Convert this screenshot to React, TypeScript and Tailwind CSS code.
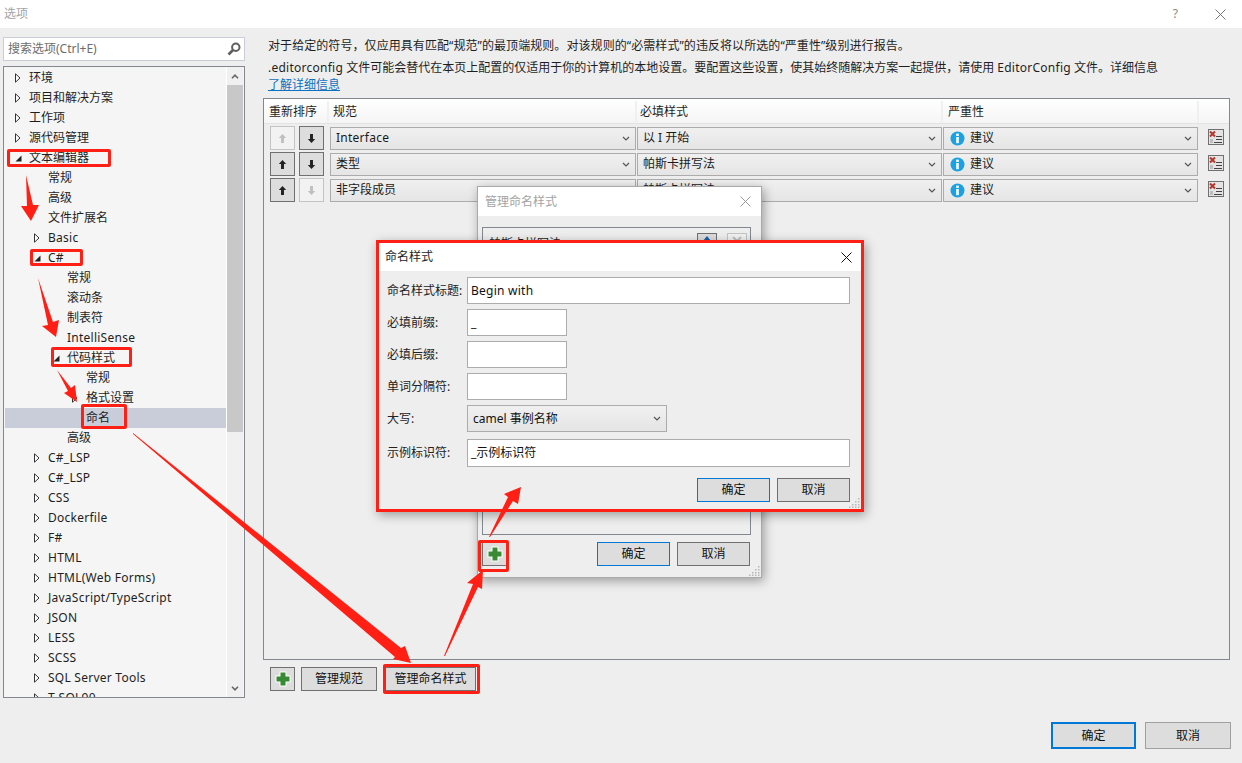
import React from "react";

const FONT = { fontFamily: '"Noto Sans", "Noto Sans CJK SC", sans-serif' };

type TreeRow = { label: string; level: number; arrow?: "open" | "closed"; selected?: boolean };

const TREE: TreeRow[] = [
  { label: "环境", level: 0, arrow: "closed" },
  { label: "项目和解决方案", level: 0, arrow: "closed" },
  { label: "工作项", level: 0, arrow: "closed" },
  { label: "源代码管理", level: 0, arrow: "closed" },
  { label: "文本编辑器", level: 0, arrow: "open" },
  { label: "常规", level: 1 },
  { label: "高级", level: 1 },
  { label: "文件扩展名", level: 1 },
  { label: "Basic", level: 1, arrow: "closed" },
  { label: "C#", level: 1, arrow: "open" },
  { label: "常规", level: 2 },
  { label: "滚动条", level: 2 },
  { label: "制表符", level: 2 },
  { label: "IntelliSense", level: 2 },
  { label: "代码样式", level: 2, arrow: "open" },
  { label: "常规", level: 3 },
  { label: "格式设置", level: 3, arrow: "closed" },
  { label: "命名", level: 3, selected: true },
  { label: "高级", level: 2 },
  { label: "C#_LSP", level: 1, arrow: "closed" },
  { label: "C#_LSP", level: 1, arrow: "closed" },
  { label: "CSS", level: 1, arrow: "closed" },
  { label: "Dockerfile", level: 1, arrow: "closed" },
  { label: "F#", level: 1, arrow: "closed" },
  { label: "HTML", level: 1, arrow: "closed" },
  { label: "HTML(Web Forms)", level: 1, arrow: "closed" },
  { label: "JavaScript/TypeScript", level: 1, arrow: "closed" },
  { label: "JSON", level: 1, arrow: "closed" },
  { label: "LESS", level: 1, arrow: "closed" },
  { label: "SCSS", level: 1, arrow: "closed" },
  { label: "SQL Server Tools", level: 1, arrow: "closed" },
  { label: "T-SQL90", level: 1, arrow: "closed" },
];

const RULES = [
  { spec: "Interface", style: "以 I 开始", up: false, down: true },
  { spec: "类型", style: "帕斯卡拼写法", up: true, down: true },
  { spec: "非字段成员", style: "帕斯卡拼写法", up: true, down: false },
];

function TreeArrow({ kind }: { kind: "open" | "closed" }) {
  if (kind === "open") {
    return (
      <svg width="7" height="7" viewBox="0 0 7 7">
        <path d="M6.5 0.5V6.5H0.5Z" fill="#222" />
      </svg>
    );
  }
  return (
    <svg width="6" height="10" viewBox="0 0 6 10">
      <path d="M0.5 0.8L5 5L0.5 9.2Z" fill="#fff" stroke="#333" strokeWidth="1" />
    </svg>
  );
}

function Chevron({ size = 8, color = "#555" }: { size?: number; color?: string }) {
  return (
    <svg width={size} height={size - 3} viewBox="0 0 8 5">
      <path d="M1 1L4 4L7 1" fill="none" stroke={color} strokeWidth="1.2" />
    </svg>
  );
}

function MoveButton({ dir, enabled }: { dir: "up" | "down"; enabled: boolean }) {
  const d =
    dir === "up" ? "M5.5 1L10 6H7.3V12H3.7V6H1Z" : "M5.5 12L10 7H7.3V1H3.7V7H1Z";
  return (
    <div
      className={
        enabled
          ? "flex h-6 w-[25px] items-center justify-center border border-[#707070] bg-[#dddddd]"
          : "flex h-6 w-[25px] items-center justify-center border border-[#c4c4c4] bg-[#f2f2f2]"
      }
    >
      <svg width="9" height="11" viewBox="0 0 11 13">
        <path d={d} fill={enabled ? "#222" : "#c0c0c0"} />
      </svg>
    </div>
  );
}

function Combo({ w, children }: { w: string; children: React.ReactNode }) {
  return (
    <div
      className={`flex h-[23px] items-center justify-between border border-[#acacac] bg-linear-to-b from-[#f0f0f0] to-[#e5e5e5] pl-[5px] pr-[5px] text-[12px] text-[#1a1a1a] ${w}`}
    >
      <div className="flex items-center">{children}</div>
      <Chevron />
    </div>
  );
}

function InfoIcon() {
  return (
    <svg width="15" height="15" viewBox="0 0 15 15" className="ml-px mr-[5px]">
      <circle cx="7.5" cy="7.5" r="7" fill="#1ba1e2" />
      <rect x="6.2" y="2.6" width="2.6" height="2.4" fill="#fff" />
      <rect x="6.2" y="6" width="2.6" height="6.2" fill="#fff" />
    </svg>
  );
}

function DeleteIcon() {
  return (
    <div className="mb-[2px] flex h-[16px] w-[16px] items-center justify-center border border-[#707070] bg-[#e4e4e4]">
      <svg width="14" height="14" viewBox="0 0 14 14">
        <path d="M1 1.5L6 6.5M6 1.5L1 6.5" stroke="#b5372a" strokeWidth="2" />
        <rect x="1" y="9" width="3" height="4" fill="#bdbdbd" />
        <path d="M7 6.5H13M7 9.5H13M5 12.5H13" stroke="#444" strokeWidth="1" />
      </svg>
    </div>
  );
}

function PlusIcon() {
  return (
    <svg width="16" height="16" viewBox="0 0 16 16">
      <path d="M4.5 0.5H11.5V4.5H15.5V11.5H11.5V15.5H4.5V11.5H0.5V4.5H4.5Z" fill="#fff" />
      <path d="M5.5 1.5H10.5V5.5H14.5V10.5H10.5V14.5H5.5V10.5H1.5V5.5H5.5Z" fill="#388a34" />
    </svg>
  );
}

function Grip() {
  return (
    <svg width="11" height="11" viewBox="0 0 11 11" className="absolute bottom-[1px] right-[1px]">
      <g fill="#b8b8b8">
        <rect x="9" y="1" width="1.5" height="1.5" />
        <rect x="6" y="4" width="1.5" height="1.5" />
        <rect x="9" y="4" width="1.5" height="1.5" />
        <rect x="3" y="7" width="1.5" height="1.5" />
        <rect x="6" y="7" width="1.5" height="1.5" />
        <rect x="9" y="7" width="1.5" height="1.5" />
        <rect x="0" y="9.5" width="1.5" height="1.5" />
        <rect x="3" y="9.5" width="1.5" height="1.5" />
        <rect x="6" y="9.5" width="1.5" height="1.5" />
        <rect x="9" y="9.5" width="1.5" height="1.5" />
      </g>
    </svg>
  );
}

function CloseX({ color, size = 11 }: { color: string; size?: number }) {
  return (
    <svg width={size} height={size} viewBox="0 0 11 11">
      <path d="M0.5 0.5L10.5 10.5M10.5 0.5L0.5 10.5" stroke={color} strokeWidth="1" />
    </svg>
  );
}

function DialogButton({ label, primary }: { label: string; primary?: boolean }) {
  return (
    <div
      className={
        primary
          ? "flex h-6 w-[73px] items-center justify-center border border-[#0078d7] bg-[#dddddd] text-[12px] text-[#111]"
          : "flex h-6 w-[73px] items-center justify-center border border-[#707070] bg-[#dddddd] text-[12px] text-[#111]"
      }
    >
      {label}
    </div>
  );
}

function FormRow({ label, children, mt }: { label: string; children: React.ReactNode; mt: string }) {
  return (
    <div className={`flex items-center ${mt}`}>
      <div className="w-[80px] text-[12px] text-[#222]">{label}</div>
      {children}
    </div>
  );
}

function TextBox({ w, h = "h-[27px]", value, wide }: { w: string; h?: string; value?: string; wide?: boolean }) {
  return (
    <div
      className={`flex items-center border border-[#acacac] bg-white pl-[3px] text-[12px] text-[#111] ${w} ${h} ${
        wide ? "tracking-[0.25px]" : ""
      }`}
    >
      {value}
    </div>
  );
}

function RedBox({ className }: { className: string }) {
  return <div className={`absolute rounded-[2px] border-[3px] border-[#ff1f14] ${className}`} />;
}

export default function App() {
  return (
    <div className="relative h-[763px] w-[1242px] overflow-hidden bg-[#eeeeee]" style={FONT}>
      {/* title bar */}
      <div className="flex h-[28px] items-center justify-between bg-white pl-[4px] pr-[16px]">
        <span className="text-[12px] text-[#a3a3a3]">选项</span>
        <div className="flex items-center gap-[37px]">
          <span className="text-[12px] text-[#888]">?</span>
          <CloseX color="#777" />
        </div>
      </div>

      <div className="flex">
        {/* left side */}
        <div className="ml-[3px] mt-[9px] w-[242px]">
          <div className="flex h-[24px] items-center justify-between border border-[#c9cdd8] bg-white pl-[4px] pr-[3px] text-[12px] text-[#6d6d6d]">
            <span>搜索选项(Ctrl+E)</span>
            <svg width="14" height="14" viewBox="0 0 14 14">
              <circle cx="8.8" cy="5.2" r="3.7" fill="none" stroke="#5f5f5f" strokeWidth="2" />
              <path d="M6 8L1.5 12.5" stroke="#5f5f5f" strokeWidth="2.6" />
            </svg>
          </div>
          <div className="mt-[5px] flex h-[632px] border border-[#828790] bg-[#f5f5f5]">
            <div className="w-[222px] overflow-hidden pl-px pt-px">
              {TREE.map((row, i) => (
                <div
                  key={i}
                  className={
                    row.selected
                      ? "relative flex h-5 items-center bg-[#c9cdda] text-[12px] text-[#1e1e1e]"
                      : "relative flex h-5 items-center text-[12px] text-[#1e1e1e]"
                  }
                >
                  {row.arrow && (
                    <span
                      className="absolute top-0 flex h-5 items-center"
                      style={{ left: 10 + row.level * 19 }}
                    >
                      <TreeArrow kind={row.arrow} />
                    </span>
                  )}
                  <span
                    className={/^[\x00-\x7f]+$/.test(row.label) ? "whitespace-nowrap tracking-[0.25px]" : "whitespace-nowrap"}
                    style={{ marginLeft: 24 + row.level * 19 }}
                  >
                    {row.label}
                  </span>
                </div>
              ))}
            </div>
            <div className="flex w-[17px] flex-col border-l border-white bg-[#f0f0f0]">
              <div className="flex h-[18px] items-center justify-center">
                <svg width="8" height="5" viewBox="0 0 8 5">
                  <path d="M1 4.2L4 1.2L7 4.2" fill="none" stroke="#666" strokeWidth="1.6" />
                </svg>
              </div>
              <div className="h-[347px] bg-[#c8c8c8]" />
              <div className="flex-1" />
              <div className="flex h-[18px] items-center justify-center">
                <svg width="8" height="5" viewBox="0 0 8 5">
                  <path d="M1 0.8L4 3.8L7 0.8" fill="none" stroke="#666" strokeWidth="1.6" />
                </svg>
              </div>
            </div>
          </div>
        </div>

        {/* right side */}
        <div className="ml-[18px] w-[967px]">
          <div className="pl-[5px] text-[12px] text-[#1e1e1e]">
            <div className="mt-[8px] h-5 whitespace-nowrap leading-5 tracking-[0.07px]">
              对于给定的符号，仅应用具有匹配“规范”的最顶端规则。对该规则的“必需样式”的违反将以所选的“严重性”级别进行报告。
            </div>
            <div className="mt-[2px] h-[19px] whitespace-nowrap leading-5">
              <span className="tracking-[0.25px]">.editorconfig</span> 文件可能会替代在本页上配置的仅适用于你的计算机的本地设置。要配置这些设置，使其始终随解决方案一起提供，请使用{" "}
              <span className="tracking-[0.25px]">EditorConfig</span> 文件。详细信息
            </div>
            <div className="h-[15px] leading-[15px] text-[#0e70c0] underline">了解详细信息</div>
          </div>

          <div className="mt-[6px] h-[562px] border border-[#828790]">
            <div className="flex h-[25px] border-b border-[#e3e3e3] bg-linear-to-b from-white to-[#f5f5f5] pt-[2px] text-[12px] text-[#1e1e1e]">
              <div className="flex w-[65px] items-center border-r-2 border-[#f0f0f0] pl-[5px]">重新排序</div>
              <div className="flex w-[308px] items-center border-r-2 border-[#f0f0f0] pl-[4px]">规范</div>
              <div className="flex w-[306px] items-center border-r-2 border-[#f0f0f0] pl-[3px]">必填样式</div>
              <div className="flex w-[256px] items-center border-r-2 border-[#f0f0f0] pl-[5px]">严重性</div>
            </div>
            {RULES.map((rule, i) => (
              <div key={i} className={i === 0 ? "mt-px flex h-[26px] items-center pl-[6px]" : "flex h-[26px] items-center pl-[6px]"}>
                <MoveButton dir="up" enabled={rule.up} />
                <div className="ml-1">
                  <MoveButton dir="down" enabled={rule.down} />
                </div>
                <div className="ml-[6px]">
                  <Combo w="w-[306px]">
                    <span className={rule.spec === "Interface" ? "tracking-[0.25px]" : ""}>{rule.spec}</span>
                  </Combo>
                </div>
                <div className="ml-px">
                  <Combo w="w-[305px]">{rule.style}</Combo>
                </div>
                <div className="ml-px">
                  <Combo w="w-[255px]">
                    <InfoIcon />
                    建议
                  </Combo>
                </div>
                <div className="ml-[10px]">
                  <DeleteIcon />
                </div>
              </div>
            ))}
          </div>

          <div className="ml-[7px] mt-[7px] flex items-center">
            <div className="flex h-6 w-[25px] items-center justify-center border border-[#707070] bg-[#dddddd]">
              <PlusIcon />
            </div>
            <div className="ml-[6px] flex h-6 w-[76px] items-center justify-center border border-[#707070] bg-[#dddddd] text-[12px] text-[#111]">
              管理规范
            </div>
            <div className="ml-[8px] flex h-6 w-[91px] items-center justify-center border border-[#707070] bg-[#dddddd] text-[12px] text-[#111]">
              管理命名样式
            </div>
          </div>
        </div>
      </div>

      {/* bottom buttons */}
      <div className="absolute left-[1051px] top-[722px] flex gap-[9px]">
        <div className="flex h-[27px] w-[85px] items-center justify-center border-2 border-[#0078d7] bg-[#dddddd] text-[12px] text-[#111]">
          确定
        </div>
        <div className="flex h-[27px] w-[86px] items-center justify-center border border-[#a0a0a0] bg-[#dddddd] text-[12px] text-[#111]">
          取消
        </div>
      </div>

      {/* manage naming styles dialog */}
      <div className="absolute left-[477px] top-[186px] h-[392px] w-[285px] border border-[#a9a9a9] bg-[#eeeeee] shadow-[2px_3px_10px_rgba(0,0,0,0.35)]">
        <div className="flex h-[29px] items-center justify-between bg-white pl-[7px] pr-[10px] text-[12px] text-[#a3a3a3]">
          <span>管理命名样式</span>
          <CloseX color="#9a9a9a" />
        </div>
        <div className="ml-[4px] mt-[11px] h-[308px] w-[269px] border border-[#828790]">
          <div className="flex items-start justify-between pl-[6px] pr-[3px] pt-[5px] text-[12px] text-[#1e1e1e]">
            <span className="mt-[2px]">帕斯卡拼写法</span>
            <div className="flex gap-[10px]">
              <div className="flex h-5 w-5 justify-center border border-[#707070] bg-[#dddddd] pt-[2px]">
                <svg width="10" height="10" viewBox="0 0 10 10">
                  <path d="M5 0L9 5H1Z" fill="#1c5fa8" />
                </svg>
              </div>
              <div className="flex h-5 w-5 justify-center border border-[#c4c4c4] bg-[#f2f2f2] pt-[2px]">
                <svg width="10" height="10" viewBox="0 0 10 10">
                  <path d="M1 1L9 9M9 1L1 9" stroke="#c0c0c0" strokeWidth="2" />
                </svg>
              </div>
            </div>
          </div>
        </div>
        <div className="ml-[4px] mt-[7px] flex items-center">
          <div className="flex h-6 w-[25px] items-center justify-center border border-[#707070] bg-[#dddddd]">
            <PlusIcon />
          </div>
          <div className="ml-[90px] flex gap-[7px]">
            <DialogButton label="确定" primary />
            <DialogButton label="取消" />
          </div>
        </div>
        <Grip />
      </div>

      {/* naming style dialog */}
      <div className="absolute left-[376px] top-[240px] h-[272px] w-[488px] border-[3px] border-[#ff1f14] bg-[#eeeeee] shadow-[2px_3px_10px_rgba(0,0,0,0.35)]">
        <div className="flex h-[28px] items-center justify-between bg-white pl-[6px] pr-[9px] text-[12px] text-[#1e1e1e]">
          <span>命名样式</span>
          <CloseX color="#111" />
        </div>
        <div className="pl-[8px]">
          <FormRow label="命名样式标题:" mt="mt-[6px]">
            <TextBox w="w-[383px]" value="Begin with" wide />
          </FormRow>
          <FormRow label="必填前缀:" mt="mt-[5px]">
            <TextBox w="w-[100px]" value="_" />
          </FormRow>
          <FormRow label="必填后缀:" mt="mt-[5px]">
            <TextBox w="w-[100px]" />
          </FormRow>
          <FormRow label="单词分隔符:" mt="mt-[5px]">
            <TextBox w="w-[100px]" />
          </FormRow>
          <FormRow label="大写:" mt="mt-[5px]">
            <div className="flex h-[27px] w-[200px] items-center justify-between border border-[#acacac] bg-linear-to-b from-[#f0f0f0] to-[#e5e5e5] pl-[5px] pr-[5px] text-[12px] text-[#111]">
              <span>camel 事例名称</span>
              <Chevron />
            </div>
          </FormRow>
          <FormRow label="示例标识符:" mt="mt-[7px]">
            <TextBox w="w-[383px]" h="h-[28px]" value="_示例标识符" />
          </FormRow>
          <div className="mt-[11px] flex justify-end gap-[7px] pr-[11px]">
            <DialogButton label="确定" primary />
            <DialogButton label="取消" />
          </div>
        </div>
        <Grip />
      </div>

      {/* red annotations */}
      <RedBox className="left-[7px] top-[149px] h-[18px] w-[104px]" />
      <RedBox className="left-[30px] top-[249px] h-[17px] w-[53px]" />
      <RedBox className="left-[51px] top-[347px] h-[20px] w-[81px]" />
      <RedBox className="left-[81px] top-[404px] h-[25px] w-[46px]" />
      <RedBox className="left-[478px] top-[540px] h-[32px] w-[31px]" />
      <RedBox className="left-[383px] top-[664px] h-[30px] w-[97px]" />
      <svg className="pointer-events-none absolute inset-0" width="1242" height="763" viewBox="0 0 1242 763">
        <g fill="#ff1f14">
          <path d="M26 175L33 205L39 205L31 221L21 206L27 206Z" />
          <path d="M38 278L53 322L59 320L56 337L42 326L48 325Z" />
          <path d="M57 370L71 388L75 385L77 402L64 393L68 391Z" />
          <path d="M133 433L401 648L405 646L411 663L393 659L395 657L133 434Z" />
          <path d="M444 656L473 584L467 583L483 570L482 589L478 587L445 656Z" />
          <path d="M489 537L508 497L504 494L521 487L518 504L513 501L490 537Z" />
        </g>
      </svg>
    </div>
  );
}
